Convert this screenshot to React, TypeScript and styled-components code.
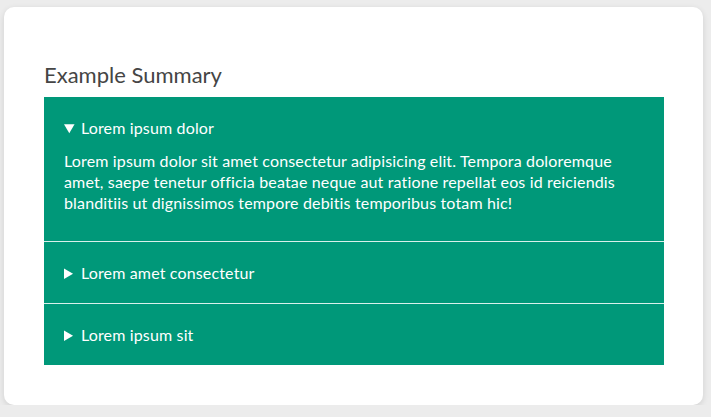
import React from "react";
import styled, { createGlobalStyle } from "styled-components";

const Global = createGlobalStyle`
  html, body { margin: 0; padding: 0; background: #ececec; }
  body { font-family: "Segoe UI", "Lato", "Noto Sans", sans-serif; }
`;

const Page = styled.div`
  padding: 7px 8px 0 4px;
`;

const Card = styled.section`
  background: #fff;
  border-radius: 10px;
  box-shadow: 0 2px 6px rgba(0, 0, 0, 0.12);
  padding: 40px 39px 40px 40px;
`;

const Title = styled.h2`
  margin: 14px 0 9px;
  font-size: 22px;
  line-height: 27px;
  font-weight: 400;
  color: #454545;
`;

const Accordion = styled.div`
  background: #009879;
  color: #fff;
`;

const Item = styled.details`
  padding: 20px;
  & + & {
    border-top: 1px solid rgba(255, 255, 255, 0.85);
  }
`;

const Summary = styled.summary`
  font-size: 16px;
  line-height: 21px;
  letter-spacing: 0.15px;
  cursor: pointer;
`;

const Body = styled.p`
  margin: 12px 0 8px;
  font-size: 16px;
  line-height: 21px;
  letter-spacing: 0.15px;
`;

const items = [
  {
    title: "Lorem ipsum dolor",
    open: true,
    text: "Lorem ipsum dolor sit amet consectetur adipisicing elit. Tempora doloremque amet, saepe tenetur officia beatae neque aut ratione repellat eos id reiciendis blanditiis ut dignissimos tempore debitis temporibus totam hic!",
  },
  { title: "Lorem amet consectetur", open: false, text: "" },
  { title: "Lorem ipsum sit", open: false, text: "" },
];

export default function App() {
  return (
    <>
      <Global />
      <Page>
        <Card>
          <Title>Example Summary</Title>
          <Accordion>
            {items.map((it) => (
              <Item key={it.title} open={it.open}>
                <Summary>{it.title}</Summary>
                {it.text && <Body>{it.text}</Body>}
              </Item>
            ))}
          </Accordion>
        </Card>
      </Page>
    </>
  );
}
